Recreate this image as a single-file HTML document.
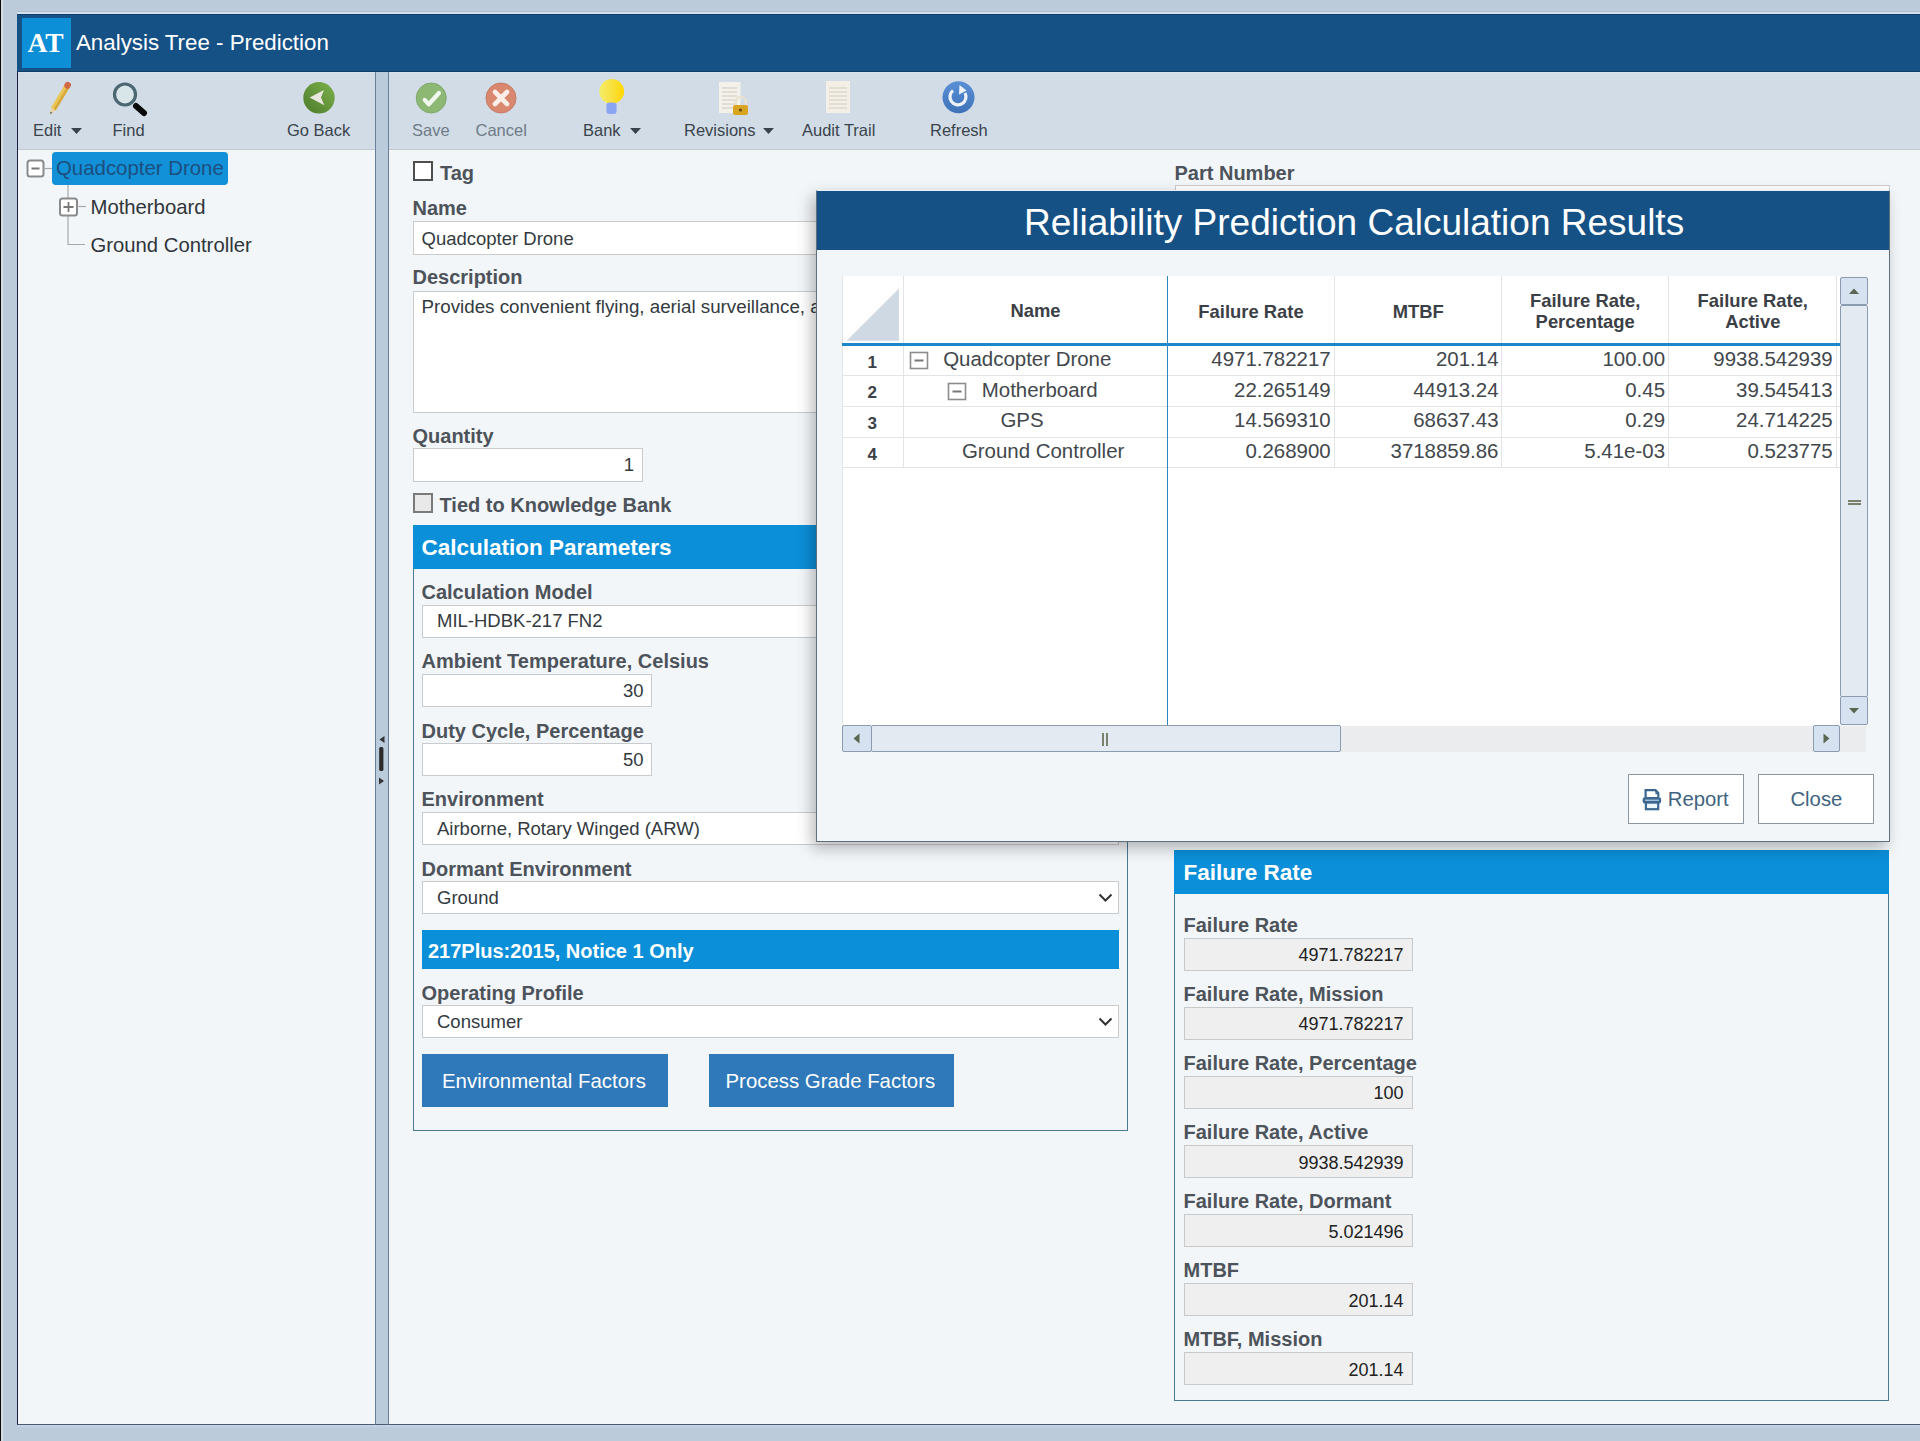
<!DOCTYPE html><html><head><meta charset="utf-8"><style>
html,body{margin:0;padding:0;}
body{width:1920px;height:1441px;overflow:hidden;position:relative;background:#bccbd9;font-family:'Liberation Sans', sans-serif;}
body div{position:absolute;white-space:nowrap;box-sizing:border-box;}
</style></head><body>
<div style="left:0px;top:0px;width:1px;height:1441px;background:#0a0a0a;"></div>
<div style="left:1px;top:0px;width:2px;height:1441px;background:#d5dde5;"></div>
<div style="left:17px;top:11px;width:1903px;height:1px;background:#b3bfcb;"></div>
<div style="left:17px;top:12px;width:1903px;height:2px;background:#d3e1ee;"></div>
<div style="left:17px;top:14px;width:1903px;height:58px;background:#155185;border-top:1px solid #0f3f6e;border-bottom:1px solid #0f3d6a;"></div>
<div style="left:22px;top:18px;width:49px;height:50px;background:#0c8fd6;"></div>
<div style="top:28.72px;font-size:27.5px;line-height:27.5px;font-weight:700;color:#ffffff;font-family:'Liberation Serif', serif;left:27.5px;">AT</div>
<div style="top:32.42px;font-size:22.3px;line-height:22.3px;font-weight:400;color:#ffffff;font-family:'Liberation Sans', sans-serif;left:76px;">Analysis Tree - Prediction</div>
<div style="left:17px;top:72px;width:358px;height:1353px;background:#f3f6f9;border-left:1px solid #1d1f45;border-bottom:1px solid #4d5b70;"></div>
<div style="left:18px;top:72px;width:357px;height:78px;background:#d1dce6;border-top:1px solid #d6e3ee;border-bottom:1px solid #c4cad0;"></div>
<div style="left:375px;top:72px;width:14px;height:1353px;background:#bacbdc;border-left:1px solid #6c7f98;border-right:1px solid #6c7f98;border-bottom:1px solid #4d5b70;"></div>
<div style="left:389px;top:72px;width:1531px;height:1353px;background:#f3f6f9;border-bottom:1px solid #4d5b70;"></div>
<div style="left:389px;top:72px;width:1531px;height:78px;background:#d1dce6;border-top:1px solid #d6e3ee;border-bottom:1px solid #c4cad0;"></div>
<div style="left:17px;top:1425px;width:1903px;height:2px;background:#c4d4e4;"></div>
<svg style="position:absolute;left:378px;top:734px;" width="8" height="52" viewBox="0 0 8 52"><path d="M6.5 2 L1.5 5.5 L6.5 9 Z" fill="#333"/><rect x="1.2" y="13" width="4.2" height="24" rx="1.5" fill="#2a2a2a"/><path d="M1 43.5 L6 47 L1 50.5 Z" fill="#333"/></svg>
<svg style="position:absolute;left:44px;top:78px;" width="32" height="40" viewBox="0 0 32 40">
<g transform="rotate(31 16 20)">
<rect x="13.2" y="7.5" width="5.6" height="25.5" fill="#e9c655"/>
<rect x="16.2" y="7.5" width="2.6" height="25.5" fill="#d7a93c"/>
<path d="M13.2 33 L18.8 33 L16 38.8 Z" fill="#e8d4a8"/>
<path d="M15 36.6 L17 36.6 L16 39 Z" fill="#5a4630"/>
<rect x="12.8" y="1.8" width="6.4" height="6.8" rx="3" fill="#cf6a45"/>
</g></svg>
<div style="top:122.03px;font-size:16.5px;line-height:16.5px;font-weight:400;color:#3a434c;font-family:'Liberation Sans', sans-serif;left:33px;">Edit</div>
<svg style="position:absolute;left:70px;top:127px;" width="13" height="8" viewBox="0 0 13 8"><path d="M1 1 L12 1 L6.5 7 Z" fill="#3a434c"/></svg>
<svg style="position:absolute;left:108px;top:78px;" width="42" height="42" viewBox="0 0 42 42">
<circle cx="17" cy="16.5" r="10.5" fill="#d8e6ea" stroke="#4b6772" stroke-width="3.2"/>
<line x1="28" y1="28" x2="36" y2="35" stroke="#0a0a0a" stroke-width="6" stroke-linecap="round"/></svg>
<div style="top:122.03px;font-size:16.5px;line-height:16.5px;font-weight:400;color:#3a434c;font-family:'Liberation Sans', sans-serif;left:112.5px;">Find</div>
<svg style="position:absolute;left:301px;top:80px;" width="36" height="36" viewBox="0 0 36 36">
<defs><linearGradient id="gb" x1="1" y1="0" x2="0" y2="1"><stop offset="0" stop-color="#7cb24a"/><stop offset="1" stop-color="#4d7a2c"/></linearGradient></defs>
<circle cx="18" cy="17.8" r="15.7" fill="url(#gb)"/>
<path d="M8.6 17.4 L23 10 L20 17.4 L23.3 25.3 Z" fill="#e8e6de"/></svg>
<div style="top:122.03px;font-size:16.5px;line-height:16.5px;font-weight:400;color:#3a434c;font-family:'Liberation Sans', sans-serif;left:287px;">Go Back</div>
<svg style="position:absolute;left:414px;top:81px;" width="35" height="35" viewBox="0 0 35 35">
<circle cx="17.25" cy="17" r="15" fill="#8cb874" stroke="#7fa86a" stroke-width="1"/>
<path d="M10.7 18.9 L14.75 23.25 L25 12" fill="none" stroke="#f1f8ee" stroke-width="4.2" stroke-linecap="round" stroke-linejoin="round"/></svg>
<div style="top:121.53px;font-size:16.5px;line-height:16.5px;font-weight:400;color:#6f7b86;font-family:'Liberation Sans', sans-serif;left:412px;">Save</div>
<svg style="position:absolute;left:484px;top:81px;" width="35" height="35" viewBox="0 0 35 35">
<circle cx="17" cy="17" r="15" fill="#d9876f" stroke="#c77a64" stroke-width="1"/>
<path d="M11 11 L23 23 M23 11 L11 23" stroke="#fbeee9" stroke-width="4.6" stroke-linecap="round"/></svg>
<div style="top:121.53px;font-size:16.5px;line-height:16.5px;font-weight:400;color:#6f7b86;font-family:'Liberation Sans', sans-serif;left:475.5px;">Cancel</div>
<svg style="position:absolute;left:596px;top:77px;" width="32" height="40" viewBox="0 0 32 40">
<defs><linearGradient id="bl" x1="0" y1="0" x2="1" y2="0"><stop offset="0" stop-color="#f4ee6a"/><stop offset="0.5" stop-color="#f8e040"/><stop offset="1" stop-color="#ffd700"/></linearGradient></defs>
<circle cx="15.7" cy="14.5" r="12.4" fill="url(#bl)"/>
<rect x="10.4" y="25.5" width="10.2" height="11.5" rx="3" fill="#8aa6f2"/></svg>
<div style="top:121.53px;font-size:16.5px;line-height:16.5px;font-weight:400;color:#3a434c;font-family:'Liberation Sans', sans-serif;left:583px;">Bank</div>
<svg style="position:absolute;left:629px;top:127px;" width="13" height="8" viewBox="0 0 13 8"><path d="M1 1 L12 1 L6.5 7 Z" fill="#3a434c"/></svg>
<svg style="position:absolute;left:715px;top:79px;" width="38" height="40" viewBox="0 0 38 40">
<rect x="4" y="3" width="21.5" height="31" fill="#f4f1ea"/>
<path d="M7 9 H22 M7 13 H22 M7 17 H22 M7 21 H22 M7 25 H20 M7 29 H18" stroke="#cfc9bd" stroke-width="1.2"/>
<path d="M21 27 v-4 a5 5 0 0 1 10 0 v4" fill="none" stroke="#e8e2d0" stroke-width="2.4"/>
<rect x="18" y="26" width="15" height="10" rx="2" fill="#d9a420"/>
<circle cx="25.5" cy="31" r="1.6" fill="#6b4a10"/></svg>
<div style="top:121.53px;font-size:16.5px;line-height:16.5px;font-weight:400;color:#3a434c;font-family:'Liberation Sans', sans-serif;left:684px;">Revisions</div>
<svg style="position:absolute;left:762px;top:127px;" width="13" height="8" viewBox="0 0 13 8"><path d="M1 1 L12 1 L6.5 7 Z" fill="#3a434c"/></svg>
<svg style="position:absolute;left:822px;top:78px;" width="32" height="38" viewBox="0 0 32 38">
<rect x="4" y="3" width="24" height="32" fill="#f3efe7"/>
<path d="M7 10 H25 M7 14 H25 M7 18 H25 M7 22 H25 M7 26 H25 M7 30 H25" stroke="#d3cdc1" stroke-width="1.2"/></svg>
<div style="top:121.53px;font-size:16.5px;line-height:16.5px;font-weight:400;color:#3a434c;font-family:'Liberation Sans', sans-serif;left:802px;">Audit Trail</div>
<svg style="position:absolute;left:940px;top:79px;" width="37" height="37" viewBox="0 0 37 37">
<defs><linearGradient id="rf" x1="0" y1="0" x2="0" y2="1"><stop offset="0" stop-color="#5a8fd6"/><stop offset="1" stop-color="#3f73b8"/></linearGradient></defs>
<circle cx="18.5" cy="18.3" r="16" fill="url(#rf)"/>
<path d="M13 11.5 A8 8 0 1 0 25 14" fill="none" stroke="#eef3fb" stroke-width="3.2"/>
<path d="M19.5 6 L26.5 11.5 L19 15.5 Z" fill="#eef3fb"/></svg>
<div style="top:121.53px;font-size:16.5px;line-height:16.5px;font-weight:400;color:#3a434c;font-family:'Liberation Sans', sans-serif;left:930px;">Refresh</div>
<div style="left:52px;top:152px;width:176px;height:33px;background:#1291d9;border-radius:4px;"></div>
<svg style="position:absolute;left:24px;top:156px;" width="240" height="100" viewBox="0 0 240 100">
<rect x="3.5" y="4.5" width="16" height="16" rx="2.5" fill="#fff" stroke="#8a8a8a" stroke-width="2"/>
<path d="M7.5 12.5 H15.5" stroke="#777" stroke-width="2"/>
<path d="M19.5 12.5 H28" stroke="#a8a8a8" stroke-width="1.2"/>
<path d="M44 29 V88.5 H61" fill="none" stroke="#a8a8a8" stroke-width="1.2"/>
<rect x="36" y="42.5" width="17" height="17" rx="2.5" fill="#fff" stroke="#8a8a8a" stroke-width="2"/>
<path d="M39.5 51 H49.5 M44.5 46 V56" stroke="#777" stroke-width="1.8"/>
<path d="M53 50.5 H62" stroke="#a8a8a8" stroke-width="1.2"/></svg>
<div style="top:157.73px;font-size:20.4px;line-height:20.4px;font-weight:400;color:#1c4f7e;font-family:'Liberation Sans', sans-serif;left:56px;">Quadcopter Drone</div>
<div style="top:196.82px;font-size:20.3px;line-height:20.3px;font-weight:400;color:#2f353a;font-family:'Liberation Sans', sans-serif;left:90.5px;">Motherboard</div>
<div style="top:234.82px;font-size:20.3px;line-height:20.3px;font-weight:400;color:#2f353a;font-family:'Liberation Sans', sans-serif;left:90.5px;">Ground Controller</div>
<div style="left:413px;top:161px;width:20px;height:20px;background:#fff;border:2px solid #4e4e4e;"></div>
<div style="top:163.27px;font-size:20px;line-height:20px;font-weight:700;color:#4d535a;font-family:'Liberation Sans', sans-serif;left:440px;">Tag</div>
<div style="top:198.47px;font-size:20px;line-height:20px;font-weight:700;color:#4d535a;font-family:'Liberation Sans', sans-serif;left:412.5px;">Name</div>
<div style="left:413px;top:221px;width:715px;height:34px;background:#ffffff;border:1px solid #c9cbcd;"></div>
<div style="top:229.54px;font-size:18.5px;line-height:18.5px;font-weight:400;color:#333a40;font-family:'Liberation Sans', sans-serif;left:421.5px;">Quadcopter Drone</div>
<div style="top:267.47px;font-size:20px;line-height:20px;font-weight:700;color:#4d535a;font-family:'Liberation Sans', sans-serif;left:412.5px;">Description</div>
<div style="left:413px;top:291px;width:715px;height:122px;background:#ffffff;border:1px solid #c9cbcd;"></div>
<div style="top:298.23px;font-size:18.75px;line-height:18.75px;font-weight:400;color:#333a40;font-family:'Liberation Sans', sans-serif;left:421.5px;">Provides convenient flying, aerial surveillance, and photography.</div>
<div style="top:425.97px;font-size:20px;line-height:20px;font-weight:700;color:#4d535a;font-family:'Liberation Sans', sans-serif;left:412.5px;">Quantity</div>
<div style="left:413px;top:448px;width:230px;height:34px;background:#ffffff;border:1px solid #c9cbcd;"></div>
<div style="top:456.34px;font-size:18.5px;line-height:18.5px;font-weight:400;color:#333a40;font-family:'Liberation Sans', sans-serif;right:1286.00px;text-align:right;">1</div>
<div style="left:413px;top:493px;width:20px;height:20px;background:#e9e9e9;border:2px solid #7a7a7a;"></div>
<div style="top:494.67px;font-size:20px;line-height:20px;font-weight:700;color:#4d535a;font-family:'Liberation Sans', sans-serif;left:439.5px;">Tied to Knowledge Bank</div>
<div style="left:413px;top:525px;width:715px;height:606px;border:1px solid #4a7a92;"></div>
<div style="left:413px;top:525px;width:715px;height:44px;background:#0b8fd8;"></div>
<div style="top:537.35px;font-size:22.5px;line-height:22.5px;font-weight:700;color:#ffffff;font-family:'Liberation Sans', sans-serif;left:421.5px;">Calculation Parameters</div>
<div style="top:582.07px;font-size:20px;line-height:20px;font-weight:700;color:#4d535a;font-family:'Liberation Sans', sans-serif;left:421.5px;">Calculation Model</div>
<div style="left:422px;top:605px;width:697px;height:33px;background:#ffffff;border:1px solid #c9cbcd;"></div>
<div style="top:612.34px;font-size:18.5px;line-height:18.5px;font-weight:400;color:#333a40;font-family:'Liberation Sans', sans-serif;left:437px;">MIL-HDBK-217 FN2</div>
<div style="top:651.47px;font-size:20px;line-height:20px;font-weight:700;color:#4d535a;font-family:'Liberation Sans', sans-serif;left:421.5px;">Ambient Temperature, Celsius</div>
<div style="left:422px;top:674px;width:230px;height:33px;background:#ffffff;border:1px solid #c9cbcd;"></div>
<div style="top:682.34px;font-size:18.5px;line-height:18.5px;font-weight:400;color:#333a40;font-family:'Liberation Sans', sans-serif;right:1276.50px;text-align:right;">30</div>
<div style="top:720.87px;font-size:20px;line-height:20px;font-weight:700;color:#4d535a;font-family:'Liberation Sans', sans-serif;left:421.5px;">Duty Cycle, Percentage</div>
<div style="left:422px;top:743px;width:230px;height:33px;background:#ffffff;border:1px solid #c9cbcd;"></div>
<div style="top:751.34px;font-size:18.5px;line-height:18.5px;font-weight:400;color:#333a40;font-family:'Liberation Sans', sans-serif;right:1276.50px;text-align:right;">50</div>
<div style="top:789.47px;font-size:20px;line-height:20px;font-weight:700;color:#4d535a;font-family:'Liberation Sans', sans-serif;left:421.5px;">Environment</div>
<div style="left:422px;top:812px;width:697px;height:33px;background:#ffffff;border:1px solid #c9cbcd;"></div>
<div style="top:819.84px;font-size:18.5px;line-height:18.5px;font-weight:400;color:#333a40;font-family:'Liberation Sans', sans-serif;left:437px;">Airborne, Rotary Winged (ARW)</div>
<div style="top:858.87px;font-size:20px;line-height:20px;font-weight:700;color:#4d535a;font-family:'Liberation Sans', sans-serif;left:421.5px;">Dormant Environment</div>
<div style="left:422px;top:881px;width:697px;height:33px;background:#ffffff;border:1px solid #c9cbcd;"></div>
<div style="top:889.34px;font-size:18.5px;line-height:18.5px;font-weight:400;color:#333a40;font-family:'Liberation Sans', sans-serif;left:437px;">Ground</div>
<svg style="position:absolute;left:1098px;top:892px;" width="16" height="12" viewBox="0 0 16 12"><path d="M1.5 2.5 L7.5 8.5 L13.5 2.5" fill="none" stroke="#333" stroke-width="2"/></svg>
<div style="left:422px;top:930px;width:697px;height:39px;background:#0b8fd8;"></div>
<div style="top:940.57px;font-size:20px;line-height:20px;font-weight:700;color:#ffffff;font-family:'Liberation Sans', sans-serif;left:428px;">217Plus:2015, Notice 1 Only</div>
<div style="top:983.07px;font-size:20px;line-height:20px;font-weight:700;color:#4d535a;font-family:'Liberation Sans', sans-serif;left:421.5px;">Operating Profile</div>
<div style="left:422px;top:1005px;width:697px;height:33px;background:#ffffff;border:1px solid #c9cbcd;"></div>
<div style="top:1013.34px;font-size:18.5px;line-height:18.5px;font-weight:400;color:#333a40;font-family:'Liberation Sans', sans-serif;left:437px;">Consumer</div>
<svg style="position:absolute;left:1098px;top:1016px;" width="16" height="12" viewBox="0 0 16 12"><path d="M1.5 2.5 L7.5 8.5 L13.5 2.5" fill="none" stroke="#333" stroke-width="2"/></svg>
<div style="left:422px;top:1054px;width:246px;height:53px;background:#2f78b9;"></div>
<div style="top:1071.03px;font-size:20.4px;line-height:20.4px;font-weight:400;color:#ffffff;font-family:'Liberation Sans', sans-serif;left:442px;">Environmental Factors</div>
<div style="left:709px;top:1054px;width:245px;height:53px;background:#2f78b9;"></div>
<div style="top:1071.03px;font-size:20.4px;line-height:20.4px;font-weight:400;color:#ffffff;font-family:'Liberation Sans', sans-serif;left:725.5px;">Process Grade Factors</div>
<div style="top:163.07px;font-size:20px;line-height:20px;font-weight:700;color:#4d535a;font-family:'Liberation Sans', sans-serif;left:1174.5px;">Part Number</div>
<div style="left:1175px;top:185px;width:715px;height:34px;background:#ffffff;border:1px solid #c9cbcd;"></div>
<div style="left:1174px;top:850px;width:715px;height:551px;border:1px solid #4a7a92;"></div>
<div style="left:1174px;top:850px;width:715px;height:44px;background:#0b8fd8;"></div>
<div style="top:862.05px;font-size:22.5px;line-height:22.5px;font-weight:700;color:#ffffff;font-family:'Liberation Sans', sans-serif;left:1183.5px;">Failure Rate</div>
<div style="top:914.57px;font-size:20px;line-height:20px;font-weight:700;color:#4d535a;font-family:'Liberation Sans', sans-serif;left:1183.5px;">Failure Rate</div>
<div style="left:1183.5px;top:938px;width:229px;height:33px;background:#efefef;border:1px solid #c7c9cb;"></div>
<div style="top:946.06px;font-size:18px;line-height:18px;font-weight:400;color:#222;font-family:'Liberation Sans', sans-serif;right:516.50px;text-align:right;">4971.782217</div>
<div style="top:983.72px;font-size:20px;line-height:20px;font-weight:700;color:#4d535a;font-family:'Liberation Sans', sans-serif;left:1183.5px;">Failure Rate, Mission</div>
<div style="left:1183.5px;top:1007px;width:229px;height:33px;background:#efefef;border:1px solid #c7c9cb;"></div>
<div style="top:1015.21px;font-size:18px;line-height:18px;font-weight:400;color:#222;font-family:'Liberation Sans', sans-serif;right:516.50px;text-align:right;">4971.782217</div>
<div style="top:1052.87px;font-size:20px;line-height:20px;font-weight:700;color:#4d535a;font-family:'Liberation Sans', sans-serif;left:1183.5px;">Failure Rate, Percentage</div>
<div style="left:1183.5px;top:1076px;width:229px;height:33px;background:#efefef;border:1px solid #c7c9cb;"></div>
<div style="top:1084.36px;font-size:18px;line-height:18px;font-weight:400;color:#222;font-family:'Liberation Sans', sans-serif;right:516.50px;text-align:right;">100</div>
<div style="top:1122.02px;font-size:20px;line-height:20px;font-weight:700;color:#4d535a;font-family:'Liberation Sans', sans-serif;left:1183.5px;">Failure Rate, Active</div>
<div style="left:1183.5px;top:1145px;width:229px;height:33px;background:#efefef;border:1px solid #c7c9cb;"></div>
<div style="top:1153.51px;font-size:18px;line-height:18px;font-weight:400;color:#222;font-family:'Liberation Sans', sans-serif;right:516.50px;text-align:right;">9938.542939</div>
<div style="top:1191.17px;font-size:20px;line-height:20px;font-weight:700;color:#4d535a;font-family:'Liberation Sans', sans-serif;left:1183.5px;">Failure Rate, Dormant</div>
<div style="left:1183.5px;top:1214px;width:229px;height:33px;background:#efefef;border:1px solid #c7c9cb;"></div>
<div style="top:1222.66px;font-size:18px;line-height:18px;font-weight:400;color:#222;font-family:'Liberation Sans', sans-serif;right:516.50px;text-align:right;">5.021496</div>
<div style="top:1260.32px;font-size:20px;line-height:20px;font-weight:700;color:#4d535a;font-family:'Liberation Sans', sans-serif;left:1183.5px;">MTBF</div>
<div style="left:1183.5px;top:1283px;width:229px;height:33px;background:#efefef;border:1px solid #c7c9cb;"></div>
<div style="top:1291.81px;font-size:18px;line-height:18px;font-weight:400;color:#222;font-family:'Liberation Sans', sans-serif;right:516.50px;text-align:right;">201.14</div>
<div style="top:1329.47px;font-size:20px;line-height:20px;font-weight:700;color:#4d535a;font-family:'Liberation Sans', sans-serif;left:1183.5px;">MTBF, Mission</div>
<div style="left:1183.5px;top:1352px;width:229px;height:33px;background:#efefef;border:1px solid #c7c9cb;"></div>
<div style="top:1360.96px;font-size:18px;line-height:18px;font-weight:400;color:#222;font-family:'Liberation Sans', sans-serif;right:516.50px;text-align:right;">201.14</div>
<div style="left:816px;top:189.5px;width:1074px;height:652.5px;background:#f3f6f9;border:1px solid #5e6f80;border-top:1px solid #e6f2f8;box-shadow:-4px 6px 14px rgba(0,0,0,0.28);"></div>
<div style="left:817px;top:190.5px;width:1072px;height:59.5px;background:#155185;"></div>
<div style="top:204.08px;font-size:37px;line-height:37px;font-weight:400;color:#ffffff;font-family:'Liberation Sans', sans-serif;left:1024px;">Reliability Prediction Calculation Results</div>
<div style="left:842px;top:276px;width:998px;height:450px;background:#ffffff;"></div>
<svg style="position:absolute;left:842px;top:276px;" width="62" height="68" viewBox="0 0 62 68"><path d="M4.6 64.8 L57 12.6 L57 64.8 Z" fill="#cfd9e3"/></svg>
<div style="left:903px;top:276px;width:1px;height:191px;background:#e2e4e6;"></div>
<div style="left:1334px;top:276px;width:1px;height:191px;background:#e2e4e6;"></div>
<div style="left:1501px;top:276px;width:1px;height:191px;background:#e2e4e6;"></div>
<div style="left:1668px;top:276px;width:1px;height:191px;background:#e2e4e6;"></div>
<div style="left:1836px;top:276px;width:1px;height:191px;background:#e2e4e6;"></div>
<div style="left:842px;top:276px;width:1px;height:450px;background:#e2e4e6;"></div>
<div style="left:842px;top:375px;width:998px;height:1px;background:#e2e4e6;"></div>
<div style="left:842px;top:406px;width:998px;height:1px;background:#e2e4e6;"></div>
<div style="left:842px;top:437px;width:998px;height:1px;background:#e2e4e6;"></div>
<div style="left:842px;top:467px;width:998px;height:1px;background:#e2e4e6;"></div>
<div style="left:842px;top:343px;width:998px;height:3px;background:#1c88c9;"></div>
<div style="left:1166.5px;top:276px;width:1.2px;height:450px;background:#2a86c4;"></div>
<div style="top:302.22px;font-size:18.4px;line-height:18.4px;font-weight:700;color:#3b4046;font-family:'Liberation Sans', sans-serif;left:635.50px;width:800px;text-align:center;">Name</div>
<div style="top:302.82px;font-size:18.4px;line-height:18.4px;font-weight:700;color:#3b4046;font-family:'Liberation Sans', sans-serif;left:851.00px;width:800px;text-align:center;">Failure Rate</div>
<div style="top:302.82px;font-size:18.4px;line-height:18.4px;font-weight:700;color:#3b4046;font-family:'Liberation Sans', sans-serif;left:1018.30px;width:800px;text-align:center;">MTBF</div>
<div style="top:291.92px;font-size:18.4px;line-height:18.4px;font-weight:700;color:#3b4046;font-family:'Liberation Sans', sans-serif;left:1185.20px;width:800px;text-align:center;">Failure Rate,</div>
<div style="top:313.42px;font-size:18.4px;line-height:18.4px;font-weight:700;color:#3b4046;font-family:'Liberation Sans', sans-serif;left:1185.20px;width:800px;text-align:center;">Percentage</div>
<div style="top:291.92px;font-size:18.4px;line-height:18.4px;font-weight:700;color:#3b4046;font-family:'Liberation Sans', sans-serif;left:1352.80px;width:800px;text-align:center;">Failure Rate,</div>
<div style="top:313.42px;font-size:18.4px;line-height:18.4px;font-weight:700;color:#3b4046;font-family:'Liberation Sans', sans-serif;left:1352.80px;width:800px;text-align:center;">Active</div>
<div style="top:353.81px;font-size:17px;line-height:17px;font-weight:700;color:#3b4046;font-family:'Liberation Sans', sans-serif;left:472.30px;width:800px;text-align:center;">1</div>
<div style="top:349.09px;font-size:20.45px;line-height:20.45px;font-weight:400;color:#42474c;font-family:'Liberation Sans', sans-serif;left:943.1999999999999px;">Quadcopter Drone</div>
<svg style="position:absolute;left:909.4px;top:351.4px;" width="20" height="19" viewBox="0 0 20 19"><rect x="1.5" y="1.5" width="17" height="16" fill="#fff" stroke="#8c8c8c" stroke-width="1.6"/><path d="M5.5 9.5 H14.5" stroke="#777" stroke-width="2"/></svg>
<div style="top:349.09px;font-size:20.45px;line-height:20.45px;font-weight:400;color:#42474c;font-family:'Liberation Sans', sans-serif;right:589.30px;text-align:right;">4971.782217</div>
<div style="top:349.09px;font-size:20.45px;line-height:20.45px;font-weight:400;color:#42474c;font-family:'Liberation Sans', sans-serif;right:421.50px;text-align:right;">201.14</div>
<div style="top:349.09px;font-size:20.45px;line-height:20.45px;font-weight:400;color:#42474c;font-family:'Liberation Sans', sans-serif;right:255.00px;text-align:right;">100.00</div>
<div style="top:349.09px;font-size:20.45px;line-height:20.45px;font-weight:400;color:#42474c;font-family:'Liberation Sans', sans-serif;right:87.30px;text-align:right;">9938.542939</div>
<div style="top:384.46px;font-size:17px;line-height:17px;font-weight:700;color:#3b4046;font-family:'Liberation Sans', sans-serif;left:472.30px;width:800px;text-align:center;">2</div>
<div style="top:379.74px;font-size:20.45px;line-height:20.45px;font-weight:400;color:#42474c;font-family:'Liberation Sans', sans-serif;left:981.8px;">Motherboard</div>
<svg style="position:absolute;left:947.4px;top:382.04999999999995px;" width="20" height="19" viewBox="0 0 20 19"><rect x="1.5" y="1.5" width="17" height="16" fill="#fff" stroke="#8c8c8c" stroke-width="1.6"/><path d="M5.5 9.5 H14.5" stroke="#777" stroke-width="2"/></svg>
<div style="top:379.74px;font-size:20.45px;line-height:20.45px;font-weight:400;color:#42474c;font-family:'Liberation Sans', sans-serif;right:589.30px;text-align:right;">22.265149</div>
<div style="top:379.74px;font-size:20.45px;line-height:20.45px;font-weight:400;color:#42474c;font-family:'Liberation Sans', sans-serif;right:421.50px;text-align:right;">44913.24</div>
<div style="top:379.74px;font-size:20.45px;line-height:20.45px;font-weight:400;color:#42474c;font-family:'Liberation Sans', sans-serif;right:255.00px;text-align:right;">0.45</div>
<div style="top:379.74px;font-size:20.45px;line-height:20.45px;font-weight:400;color:#42474c;font-family:'Liberation Sans', sans-serif;right:87.30px;text-align:right;">39.545413</div>
<div style="top:415.11px;font-size:17px;line-height:17px;font-weight:700;color:#3b4046;font-family:'Liberation Sans', sans-serif;left:472.30px;width:800px;text-align:center;">3</div>
<div style="top:410.39px;font-size:20.45px;line-height:20.45px;font-weight:400;color:#42474c;font-family:'Liberation Sans', sans-serif;left:1000.4px;">GPS</div>
<div style="top:410.39px;font-size:20.45px;line-height:20.45px;font-weight:400;color:#42474c;font-family:'Liberation Sans', sans-serif;right:589.30px;text-align:right;">14.569310</div>
<div style="top:410.39px;font-size:20.45px;line-height:20.45px;font-weight:400;color:#42474c;font-family:'Liberation Sans', sans-serif;right:421.50px;text-align:right;">68637.43</div>
<div style="top:410.39px;font-size:20.45px;line-height:20.45px;font-weight:400;color:#42474c;font-family:'Liberation Sans', sans-serif;right:255.00px;text-align:right;">0.29</div>
<div style="top:410.39px;font-size:20.45px;line-height:20.45px;font-weight:400;color:#42474c;font-family:'Liberation Sans', sans-serif;right:87.30px;text-align:right;">24.714225</div>
<div style="top:445.76px;font-size:17px;line-height:17px;font-weight:700;color:#3b4046;font-family:'Liberation Sans', sans-serif;left:472.30px;width:800px;text-align:center;">4</div>
<div style="top:441.04px;font-size:20.45px;line-height:20.45px;font-weight:400;color:#42474c;font-family:'Liberation Sans', sans-serif;left:961.9px;">Ground Controller</div>
<div style="top:441.04px;font-size:20.45px;line-height:20.45px;font-weight:400;color:#42474c;font-family:'Liberation Sans', sans-serif;right:589.30px;text-align:right;">0.268900</div>
<div style="top:441.04px;font-size:20.45px;line-height:20.45px;font-weight:400;color:#42474c;font-family:'Liberation Sans', sans-serif;right:421.50px;text-align:right;">3718859.86</div>
<div style="top:441.04px;font-size:20.45px;line-height:20.45px;font-weight:400;color:#42474c;font-family:'Liberation Sans', sans-serif;right:255.00px;text-align:right;">5.41e-03</div>
<div style="top:441.04px;font-size:20.45px;line-height:20.45px;font-weight:400;color:#42474c;font-family:'Liberation Sans', sans-serif;right:87.30px;text-align:right;">0.523775</div>
<div style="left:1840px;top:277px;width:28px;height:28px;background:#d6e2f0;border:1px solid #8b9bb0;border-radius:2px;"></div>
<svg style="position:absolute;left:1840px;top:277px;" width="28" height="28" viewBox="0 0 28 28"><path d="M9 17 L14 11.5 L19 17 Z" fill="#5a6650"/></svg>
<div style="left:1840px;top:305px;width:28px;height:392px;background:#e3eaf2;border:1px solid #8b9bb0;border-radius:2px;"></div>
<div style="left:1848px;top:500px;width:13px;height:1.8px;background:#7b806c;"></div>
<div style="left:1848px;top:503.2px;width:13px;height:1.8px;background:#7b806c;"></div>
<div style="left:1840px;top:696px;width:28px;height:29px;background:#d6e2f0;border:1px solid #8b9bb0;border-radius:2px;"></div>
<svg style="position:absolute;left:1840px;top:696px;" width="28" height="29" viewBox="0 0 28 29"><path d="M9 12 L19 12 L14 17.5 Z" fill="#5a6650"/></svg>
<div style="left:842px;top:726px;width:1024px;height:26px;background:#ebecee;"></div>
<div style="left:842px;top:725px;width:30px;height:27px;background:#d6e2f0;border:1px solid #8b9bb0;border-radius:2px;"></div>
<svg style="position:absolute;left:842px;top:725px;" width="30" height="27" viewBox="0 0 30 27"><path d="M17.5 8.5 L11.5 13.5 L17.5 18.5 Z" fill="#5a6650"/></svg>
<div style="left:871px;top:725px;width:470px;height:27px;background:#e3eaf2;border:1px solid #8b9bb0;border-radius:2px;"></div>
<div style="left:1102px;top:733px;width:2px;height:13px;background:#7b806c;"></div>
<div style="left:1105.5px;top:733px;width:2px;height:13px;background:#7b806c;"></div>
<div style="left:1813px;top:725px;width:27px;height:27px;background:#d6e2f0;border:1px solid #8b9bb0;border-radius:2px;"></div>
<svg style="position:absolute;left:1813px;top:725px;" width="27" height="27" viewBox="0 0 27 27"><path d="M10.5 8.5 L16.5 13.5 L10.5 18.5 Z" fill="#5a6650"/></svg>
<div style="left:1628px;top:774px;width:116px;height:50px;background:#ffffff;border:1px solid #8d97a1;"></div>
<svg style="position:absolute;left:1640px;top:786px;" width="24" height="25" viewBox="0 0 24 25"><path d="M5.6 11 V4.2 H15.5 L18.3 7 V11" fill="none" stroke="#3b6791" stroke-width="2.2"/>
<path d="M16 4.5 V7.6 H18.5" fill="none" stroke="#3b6791" stroke-width="1.2"/>
<rect x="2.6" y="11" width="18.6" height="6.8" rx="3" fill="#3b6791"/>
<path d="M5 14.2 H19" stroke="#cfe3f2" stroke-width="1"/>
<rect x="5.9" y="16.6" width="12.3" height="6.6" fill="#eef8fc" stroke="#3b6791" stroke-width="2.2"/></svg>
<div style="top:789.12px;font-size:20.3px;line-height:20.3px;font-weight:400;color:#40647f;font-family:'Liberation Sans', sans-serif;left:1667.8px;">Report</div>
<div style="left:1758px;top:774px;width:116px;height:50px;background:#ffffff;border:1px solid #8d97a1;"></div>
<div style="top:789.12px;font-size:20.3px;line-height:20.3px;font-weight:400;color:#40647f;font-family:'Liberation Sans', sans-serif;left:1416.40px;width:800px;text-align:center;">Close</div>
</body></html>
